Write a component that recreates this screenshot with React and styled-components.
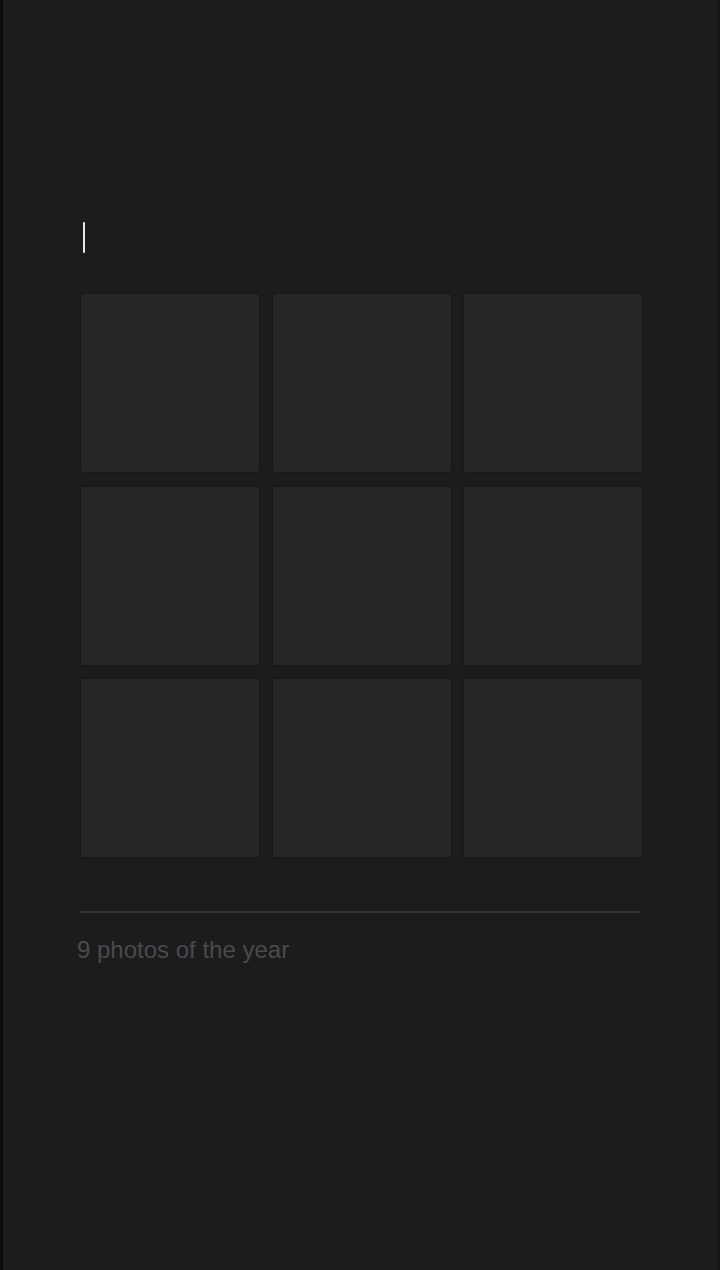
import React from "react";
import styled, { createGlobalStyle } from "styled-components";

const Global = createGlobalStyle`
  html, body { margin: 0; padding: 0; background: #1c1c1d; }
  body { font-family: "Liberation Sans", Arial, sans-serif; }
`;

const Screen = styled.div`
  box-sizing: border-box;
  width: 720px;
  height: 1270px;
  background: #1c1c1d;
  border-left: 3px solid #0b0b0b;
  border-right: 3px solid #161617;
  display: flex;
  flex-direction: column;
  padding: 222px 0 0 74px;
`;

const TitleInput = styled.div`
  height: 32px;
  padding-left: 6px;
  display: flex;
  align-items: flex-start;
`;

const Caret = styled.span`
  display: block;
  width: 2px;
  height: 31px;
  background: #e8e8e8;
  border-radius: 1px;
`;

const Grid = styled.div`
  margin-top: 40px;
  margin-left: 4px;
  width: 561px;
  display: grid;
  grid-template-columns: repeat(3, 178px);
  grid-auto-rows: 178px;
  column-gap: 13.5px;
  row-gap: 14.5px;
`;

const Tile = styled.div`
  background: #262626;
  border-radius: 2px;
  box-shadow: 0 0 3px rgba(0, 0, 0, 0.25);
`;

const Divider = styled.div`
  margin-top: 54px;
  margin-left: 3px;
  width: 560px;
  height: 2px;
  background: #333336;
`;

const Caption = styled.div`
  margin-top: 23px;
  font-size: 24px;
  line-height: 28px;
  color: #4a4a4d;
`;

export default function App() {
  return (
    <>
      <Global />
      <Screen>
        <TitleInput>
          <Caret />
        </TitleInput>
        <Grid>
          {Array.from({ length: 9 }).map((_, i) => (
            <Tile key={i} />
          ))}
        </Grid>
        <Divider />
        <Caption>9 photos of the year</Caption>
      </Screen>
    </>
  );
}
